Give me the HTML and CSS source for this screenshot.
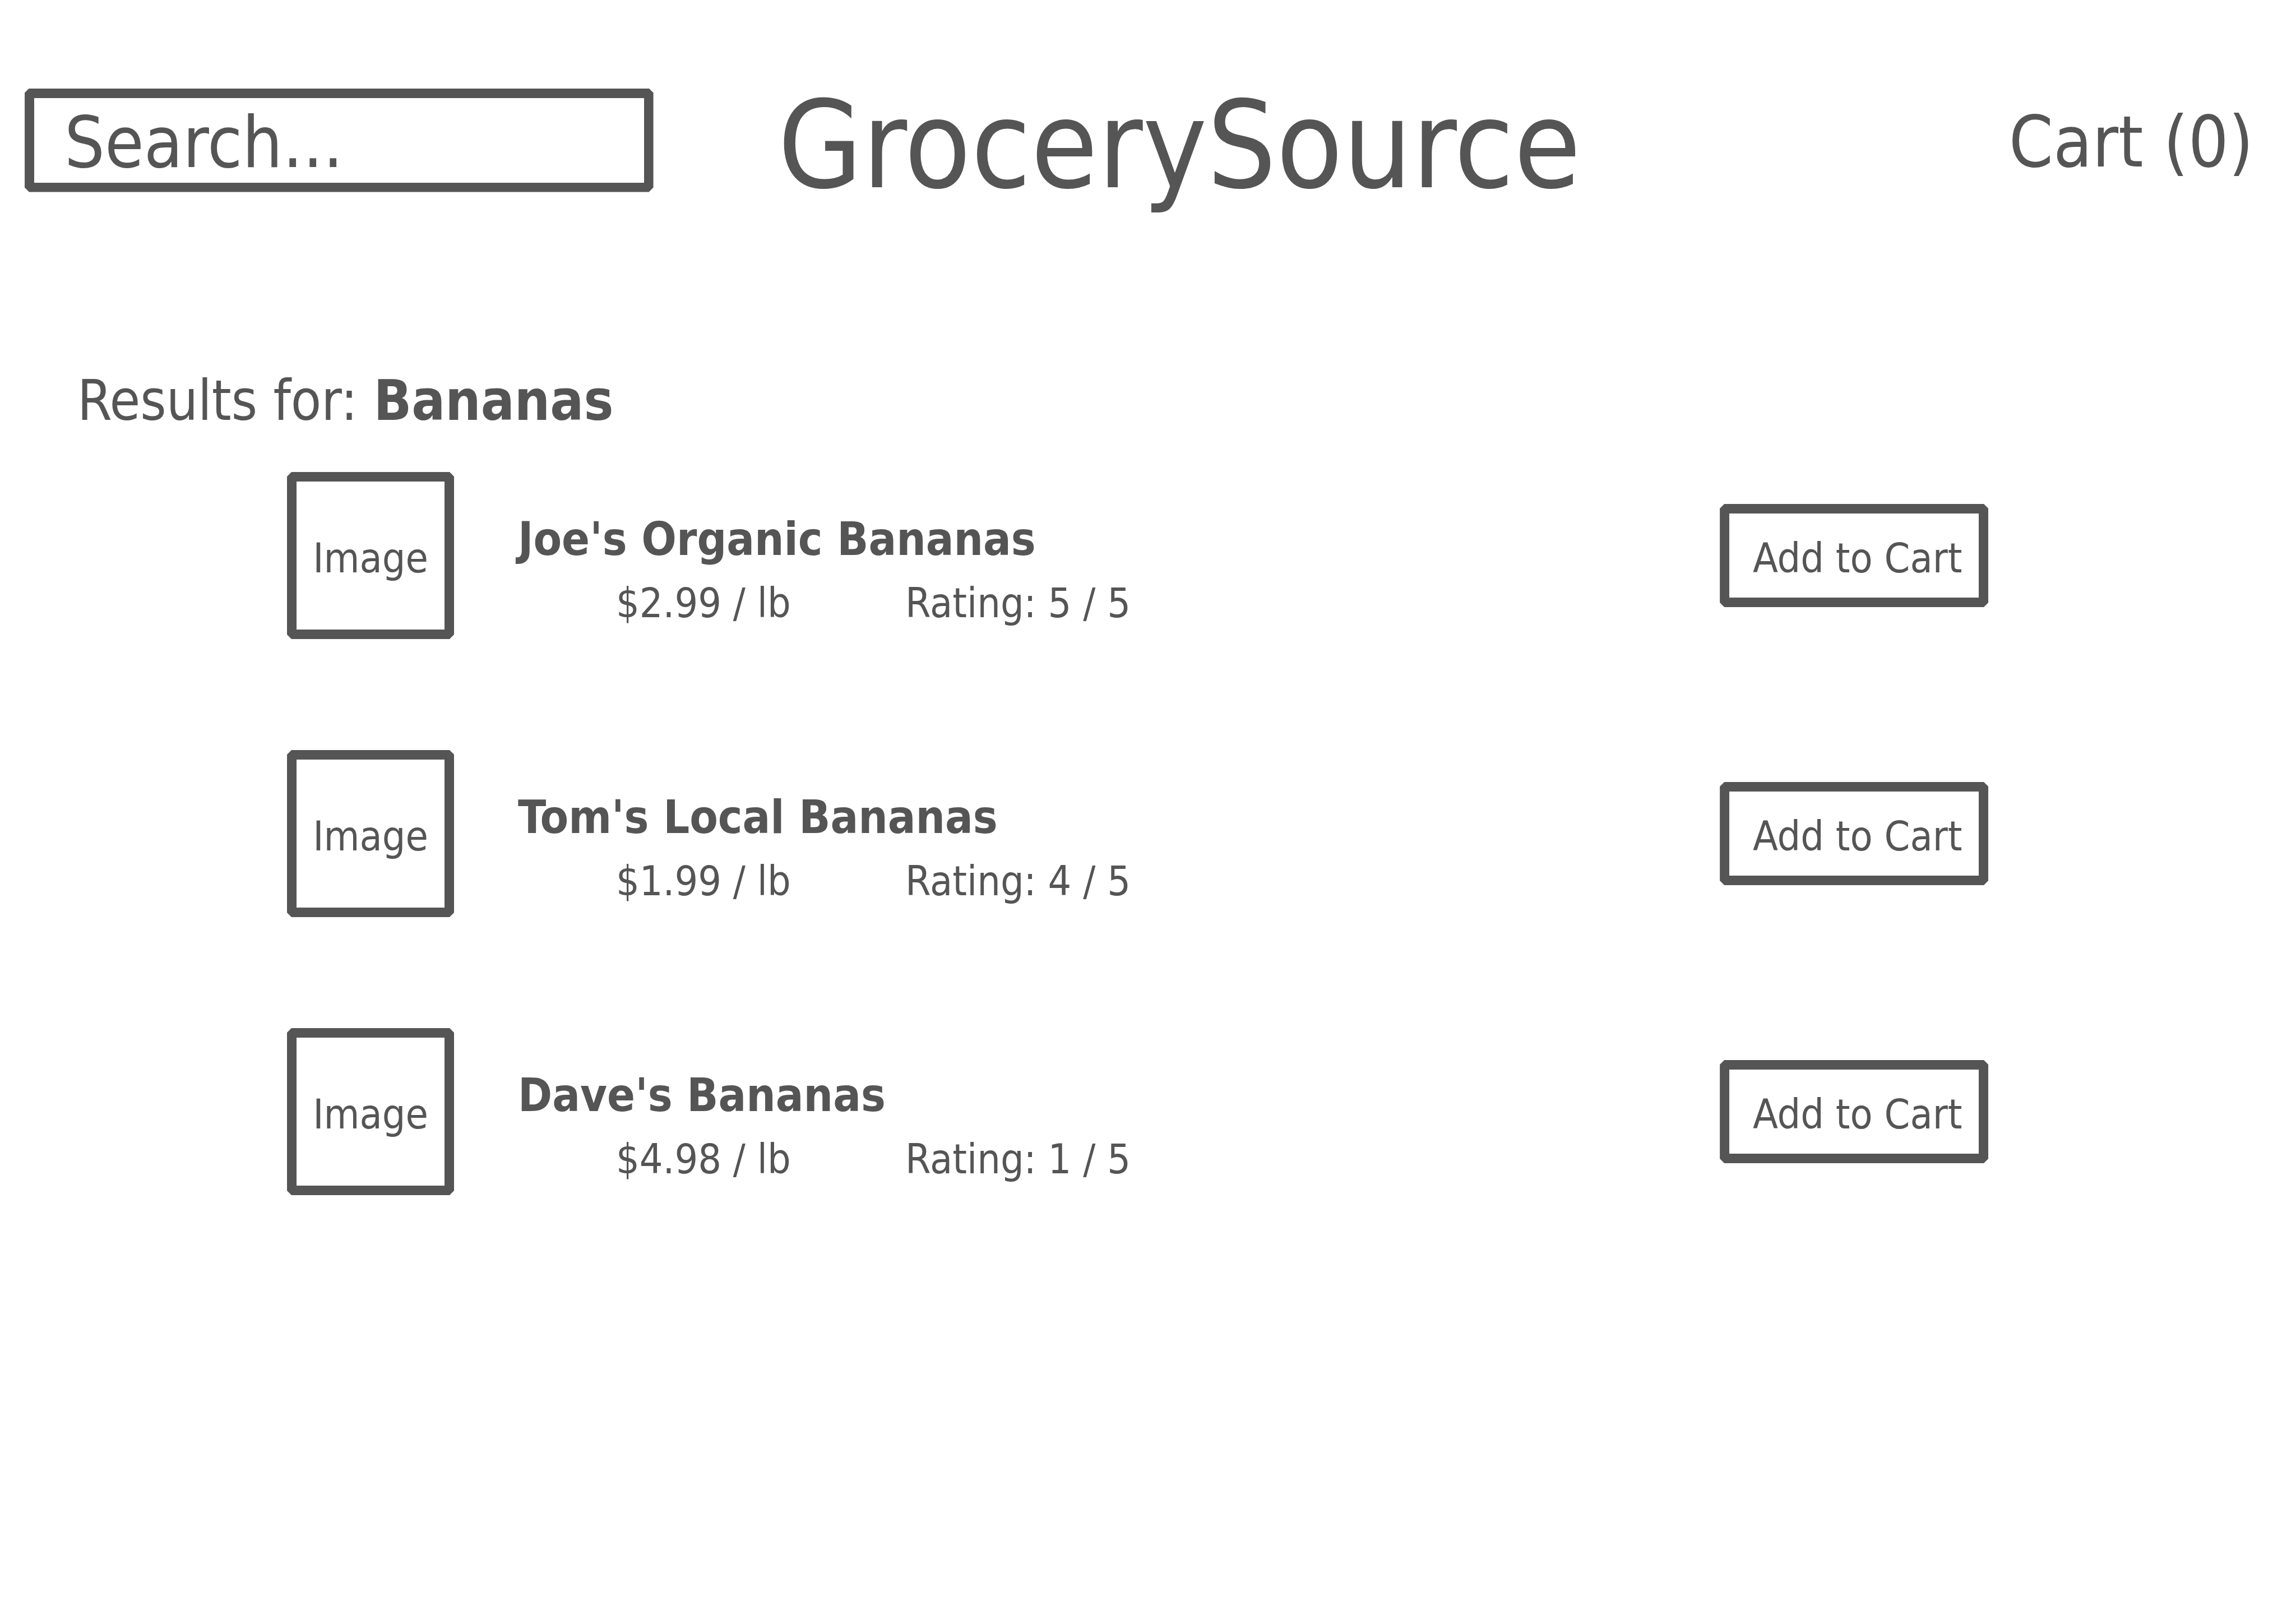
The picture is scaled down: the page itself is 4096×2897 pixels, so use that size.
FILE: index.html
```html
<!DOCTYPE html>
<html lang="en">
<head>
<meta charset="utf-8">
<title>GrocerySource</title>
<link rel="stylesheet" href="styles.css">
</head>
<body>
<header class="header">
  <form class="search" role="search">
    <input class="outlined search-input" type="search" aria-label="Search" placeholder="Search...">
  </form>
  <h1 class="brand">GrocerySource</h1>
  <a class="cart" href="#cart">Cart (0)</a>
</header>
<main class="results">
  <h2 class="results-title">Results for: <strong>Bananas</strong></h2>
  <ul class="products">
    <li class="product">
      <div class="outlined thumb">Image</div>
      <div class="info">
        <h3 class="name">Joe's Organic Bananas</h3>
        <p class="facts"><span>$2.99 / lb</span><span>Rating: 5 / 5</span></p>
      </div>
      <button class="outlined add" type="button">Add to Cart</button>
    </li>
    <li class="product">
      <div class="outlined thumb">Image</div>
      <div class="info">
        <h3 class="name">Tom's Local Bananas</h3>
        <p class="facts"><span>$1.99 / lb</span><span>Rating: 4 / 5</span></p>
      </div>
      <button class="outlined add" type="button">Add to Cart</button>
    </li>
    <li class="product">
      <div class="outlined thumb">Image</div>
      <div class="info">
        <h3 class="name">Dave's Bananas</h3>
        <p class="facts"><span>$4.98 / lb</span><span>Rating: 1 / 5</span></p>
      </div>
      <button class="outlined add" type="button">Add to Cart</button>
    </li>
  </ul>
</main>
</body>
</html>
```
FILE: styles.css
```css
* {
  box-sizing: border-box;
  margin: 0;
  padding: 0;
}

body {
  background: #fff;
  color: #555;
  font-family: Tahoma, "DejaVu Sans Condensed", "DejaVu Sans", sans-serif;
  font-size: 73px;
}

/* Thick frame with small bevelled corners */
.outlined {
  border: 17px solid #555;
  border-radius: 0;
  background: #fff;
  color: inherit;
  font-family: inherit;
  clip-path: polygon(8px 0, calc(100% - 8px) 0, 100% 8px, 100% calc(100% - 8px), calc(100% - 8px) 100%, 8px 100%, 0 calc(100% - 8px), 0 8px);
}

.header {
  display: grid;
  grid-template-columns: 1121fr 1876fr 977fr;
  align-items: center;
  padding: 110px 76px 0 44px;
}

.search-input {
  display: block;
  width: 100%;
  height: 185px;
  padding: 8px 54px 0;
  font-size: 126px;
  appearance: none;
  outline: none;
}

.search-input::placeholder {
  color: #555;
  opacity: 1;
}

.brand {
  padding-top: 20px;
  font-size: 216px;
  font-weight: 400;
  line-height: 260px;
  text-align: center;
}

.cart {
  padding-top: 8px;
  color: inherit;
  font-size: 126px;
  line-height: 152px;
  text-align: right;
  text-decoration: none;
}

.results-title {
  padding: 265px 138px 67px;
  font-size: 99px;
  font-weight: 400;
  line-height: 120px;
}

.products {
  display: grid;
  gap: 198px;
  padding: 0 13.4% 0 12.5%;
  list-style: none;
}

.product {
  display: flex;
  align-items: center;
}

.thumb {
  display: grid;
  place-items: center;
  width: 298px;
  height: 298px;
  padding-top: 8px;
}

.info {
  flex: 1;
  align-self: flex-start;
  padding: 70px 0 0 114px;
}

.name {
  font-size: 82px;
  line-height: 100px;
}

.facts {
  display: grid;
  grid-template-columns: 516px 1fr;
  padding: 20px 0 0 175px;
  line-height: 88px;
}

.add {
  width: 479px;
  height: 184px;
  padding: 8px 0 0 12px;
  font-size: 73px;
}
```
